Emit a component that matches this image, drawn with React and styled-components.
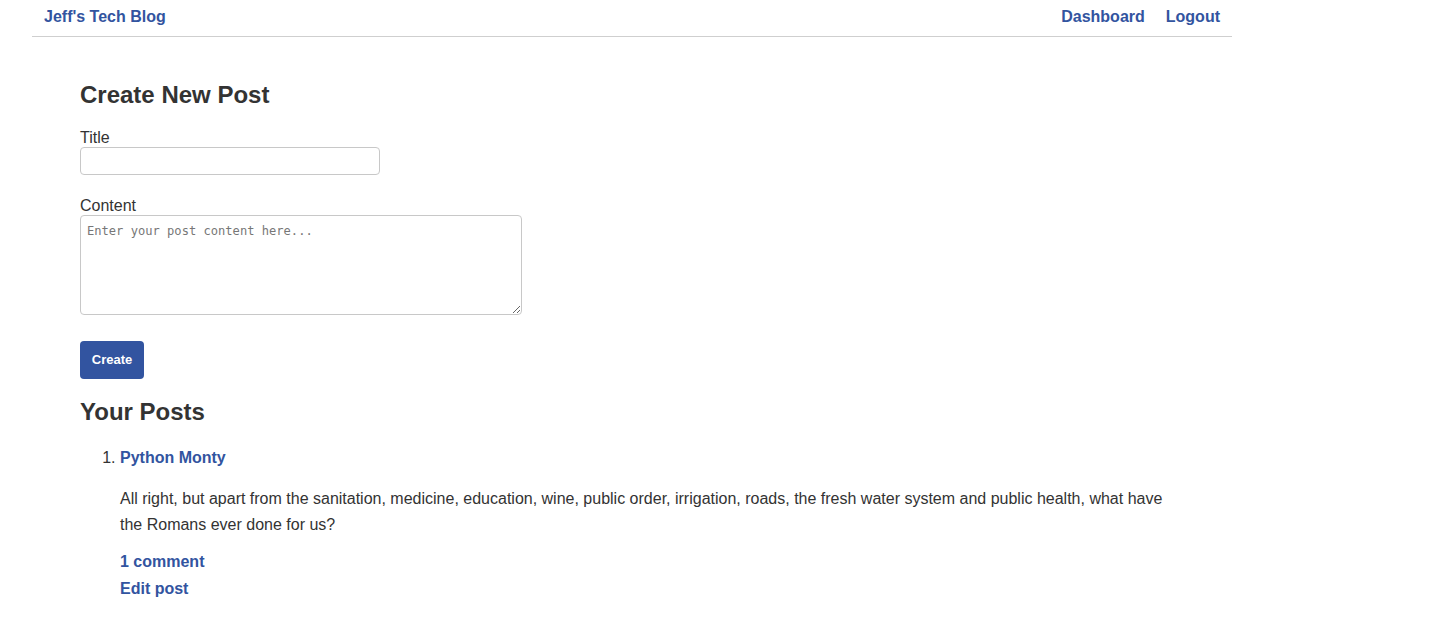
import React from "react";
import styled, { createGlobalStyle } from "styled-components";

const Global = createGlobalStyle`
  html, body { margin: 0; padding: 0; background: #fff; }
  body { font-family: "Liberation Sans", Arial, sans-serif; font-size: 16px; color: #333; }
  * { box-sizing: border-box; }
`;

const Page = styled.div`
  width: 1200px;
  margin-left: 32px;
`;

const Header = styled.header`
  display: flex;
  justify-content: space-between;
  align-items: center;
  height: 37px;
  padding: 0 12px 2px;
  border-bottom: 1px solid #cfcfcf;
`;

const NavLink = styled.a`
  color: #3254a0;
  font-weight: bold;
  font-size: 16px;
  text-decoration: none;
  cursor: pointer;
`;

const Nav = styled.nav`
  display: flex;
  gap: 21px;
`;

const Main = styled.main`
  padding: 44px 48px 0;
`;

const Heading = styled.h2`
  font-size: 24px;
  font-weight: bold;
  line-height: 28px;
  margin: 0;
  color: #333;
`;

const Form = styled.form`
  display: flex;
  flex-direction: column;
  align-items: flex-start;
  margin: 20px 0 19px;
`;

const Label = styled.label`
  display: block;
  line-height: 18px;
  margin-top: ${(p) => p.$top || 0}px;
`;

const Input = styled.input`
  width: 300px;
  height: 28px;
  border: 1px solid #c8c8c8;
  border-radius: 4px;
  padding: 4px 6px;
  font-size: 14px;
  outline: none;
`;

const TextArea = styled.textarea`
  width: 442px;
  height: 100px;
  border: 1px solid #c8c8c8;
  border-radius: 4px;
  padding: 8px 6px 6px;
  font-family: "DejaVu Sans Mono", "Liberation Mono", monospace;
  font-size: 12.1px;
  outline: none;
  &::placeholder { color: #777; }
`;

const Button = styled.button`
  margin-top: 26px;
  width: 64px;
  height: 38px;
  padding: 0 0 2px;
  background: #3254a0;
  color: #fff;
  border: none;
  border-radius: 4px;
  font-family: "Liberation Sans", Arial, sans-serif;
  font-weight: bold;
  font-size: 13px;
  cursor: pointer;
`;

const List = styled.ol`
  margin: 19px 0 0;
  padding-left: 40px;
  line-height: 26px;
`;

const Item = styled.li``;

const TitleLink = styled(NavLink)`
  display: inline-block;
`;

const Body = styled.p`
  margin: 15px 0 11px;
  line-height: 25.6px;
`;

const ItemLink = styled(NavLink)`
  display: block;
  line-height: 27px;
`;

export default function App() {
  return (
    <>
      <Global />
      <Page>
        <Header>
          <NavLink>Jeff's Tech Blog</NavLink>
          <Nav>
            <NavLink>Dashboard</NavLink>
            <NavLink>Logout</NavLink>
          </Nav>
        </Header>
        <Main>
          <Heading>Create New Post</Heading>
          <Form onSubmit={(e) => e.preventDefault()}>
            <Label htmlFor="title">Title</Label>
            <Input id="title" type="text" />
            <Label htmlFor="content" $top={22}>Content</Label>
            <TextArea id="content" placeholder="Enter your post content here..." />
            <Button type="submit">Create</Button>
          </Form>
          <Heading>Your Posts</Heading>
          <List>
            <Item>
              <TitleLink>Python Monty</TitleLink>
              <Body>
                All right, but apart from the sanitation, medicine, education, wine, public order, irrigation, roads, the fresh water system and public health, what have the Romans ever done for us?
              </Body>
              <ItemLink>1 comment</ItemLink>
              <ItemLink>Edit post</ItemLink>
            </Item>
          </List>
        </Main>
      </Page>
    </>
  );
}
